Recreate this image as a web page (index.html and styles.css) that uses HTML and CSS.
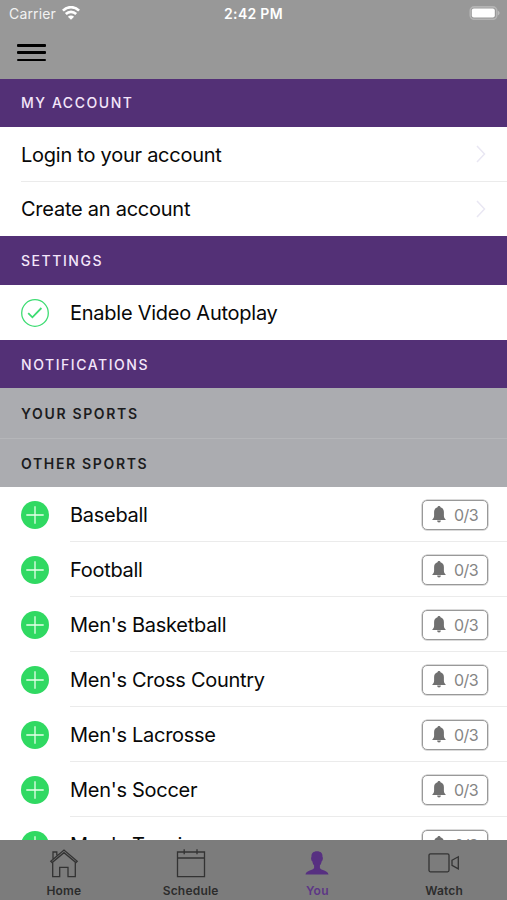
FILE: index.html
```
<!DOCTYPE html>
<html lang="en">
<head>
<meta charset="utf-8">
<title>You</title>
<link rel="stylesheet" href="styles.css">
</head>
<body>
<svg width="0" height="0" class="defs">
  <symbol id="bell" viewBox="0 0 14 17"><path d="M7 0c-.9 0-1.500.6-1.500 1.300C3.300 2 2.100 3.700 2.100 6v3.700C2.100 11.300 1.400 12.500 0 13.900h14c-1.400-1.400-2.100-2.600-2.100-4.200V6c0-2.300-1.200-4-3.400-4.700C8.500.6 7.900 0 7 0zM5.100 14.600a1.900 2 0 0 0 3.800 0z" fill="currentColor"/></symbol>
  <symbol id="plus" viewBox="0 0 28 28"><circle cx="14" cy="14" r="14" fill="#30d962"/><path d="M14 5.300v17.400M5.300 14h17.400" stroke="#e6ffe9" stroke-width="1.300"/></symbol>
  <symbol id="chevron" viewBox="0 0 10 18"><path d="M1 1l7.500 8L1 17" fill="none" stroke="#e9e7f3" stroke-width="1.500"/></symbol>
</svg>
<div class="screen">
  <header class="top">
    <div class="status">
      <div class="carrier"><span>Carrier</span>
        <svg width="18" height="14" viewBox="0 0 18 14" fill="none" stroke="#fff" stroke-width="2.600"><path d="M.9 4.600C5.500 0 12.500 0 17.100 4.600M3.800 8c3-2.900 7.400-2.900 10.400 0"/><path d="M9 13.800L5.900 10.700c1.800-1.600 4.400-1.600 6.200 0z" fill="#fff" stroke="none"/></svg>
      </div>
      <div class="time">2:42 PM</div>
      <svg class="battery" width="31" height="14" viewBox="0 0 31 14"><rect x="1.200" y=".9" width="26.600" height="12.400" rx="4" fill="none" stroke="#b4b4b4" stroke-width="1.600"/><rect x="2.800" y="2.400" width="23" height="9.200" rx="2" fill="#fff"/><path d="M28.900 4.700c2.200.8 2.200 3.800 0 4.600z" fill="#bcbcbc"/></svg>
    </div>
    <div class="menu"><i></i><i></i><i></i></div>
  </header>
  <main class="list">
    <h2 class="section">MY ACCOUNT</h2>
    <div class="link"><span>Login to your account</span><svg width="10" height="18"><use href="#chevron"/></svg></div>
    <div class="link last"><span>Create an account</span><svg width="10" height="18"><use href="#chevron"/></svg></div>
    <h2 class="section settings">SETTINGS</h2>
    <div class="option"><svg width="28" height="28" viewBox="0 0 28 28" fill="none" stroke="#3ddc72"><circle cx="14" cy="14" r="13.300" stroke-width="1.300"/><path d="M7.200 14.200l4.200 4.100 9-9.300" stroke-width="1.800"/></svg><span>Enable Video Autoplay</span></div>
    <h2 class="section notifications">NOTIFICATIONS</h2>
    <h3 class="sub">YOUR SPORTS</h3>
    <h3 class="sub other">OTHER SPORTS</h3>
    <div class="sport"><svg width="28" height="28"><use href="#plus"/></svg><div class="cell"><span>Baseball</span><div class="badge"><svg width="14" height="17"><use href="#bell"/></svg>0/3</div></div></div>
    <div class="sport"><svg width="28" height="28"><use href="#plus"/></svg><div class="cell"><span>Football</span><div class="badge"><svg width="14" height="17"><use href="#bell"/></svg>0/3</div></div></div>
    <div class="sport"><svg width="28" height="28"><use href="#plus"/></svg><div class="cell"><span>Men's Basketball</span><div class="badge"><svg width="14" height="17"><use href="#bell"/></svg>0/3</div></div></div>
    <div class="sport"><svg width="28" height="28"><use href="#plus"/></svg><div class="cell"><span>Men's Cross Country</span><div class="badge"><svg width="14" height="17"><use href="#bell"/></svg>0/3</div></div></div>
    <div class="sport"><svg width="28" height="28"><use href="#plus"/></svg><div class="cell"><span>Men's Lacrosse</span><div class="badge"><svg width="14" height="17"><use href="#bell"/></svg>0/3</div></div></div>
    <div class="sport"><svg width="28" height="28"><use href="#plus"/></svg><div class="cell"><span>Men's Soccer</span><div class="badge"><svg width="14" height="17"><use href="#bell"/></svg>0/3</div></div></div>
    <div class="sport"><svg width="28" height="28"><use href="#plus"/></svg><div class="cell"><span>Men's Tennis</span><div class="badge"><svg width="14" height="17"><use href="#bell"/></svg>0/3</div></div></div>
  </main>
  <nav class="tabs">
    <div class="tab"><svg width="32" height="32" viewBox="0 0 32 32"><path d="M2.800 13.200L16 2l13.200 11.200-1.300 1.300L16 4.700 4.100 14.500zM4.700 13.800v14.900h7v-9.400h8.300v9.400h7.300V13.800M5 10.700V4h3.800v3.200"/></svg><span>Home</span></div>
    <div class="tab"><svg width="32" height="32" viewBox="0 0 32 32"><path d="M2.500 4H29.500v24.700H2.500zM2.500 10H29.500M9.200 1.300v5M22 1.300v5"/></svg><span>Schedule</span></div>
    <div class="tab active"><svg width="32" height="32" viewBox="0 0 32 32"><path d="M16 3.300c-3.800 0-5.800 2.100-5.500 5.700-.8.400-.3 3.700.8 4.200.3 2 1 3.300 1.800 4.100v2.800c-1 2.400-7.900 2.200-8.600 6.400h23c-.7-4.200-7.600-4-8.600-6.400v-2.800c.8-.8 1.500-2.100 1.800-4.100 1.100-.5 1.600-3.800.8-4.200.3-3.600-1.700-5.700-5.500-5.700z"/></svg><span>You</span></div>
    <div class="tab"><svg width="32" height="32" viewBox="0 0 32 32"><rect x="1" y="5.800" width="20" height="18" rx="1.500"/><path d="M24 12.200l6.300-3.400v12l-6.300-3.400z"/></svg><span>Watch</span></div>
  </nav>
</div>
</body>
</html>
```
FILE: styles.css
```
* { box-sizing: border-box; }
body { margin: 0; font-family: Inter, sans-serif; color: #080808; }
.defs { position: absolute; }
svg { flex: none; display: block; }
.screen { width: 507px; height: 900px; display: flex; flex-direction: column; overflow: hidden; background: #fff; }
.top { flex: none; height: 79px; background: #989898; }
.status { height: 27px; display: grid; grid-template-columns: 1fr auto 1fr; align-items: center; padding: 0 7px 0 9px; color: #fff; font-size: 14px; }
.carrier { display: flex; gap: 6px; align-items: center; color: #f2f2f2; letter-spacing: .15px; }
.carrier svg { margin-top: -2px; }
.time { font-weight: 600; letter-spacing: .3px; margin-right: 2px; }
.battery { justify-self: end; margin-top: -1px; }
.menu { display: flex; flex-direction: column; gap: 4.800px; width: 29px; margin: 17px 0 0 17px; }
.menu i { height: 2.500px; border-radius: 1px; background: #000; }
.list { flex: 1; min-height: 0; overflow: hidden; }
.section { margin: 0; height: 48px; padding-left: 21px; line-height: 48px; background: #533076; color: #f4e6fa; font-size: 14px; font-weight: 500; letter-spacing: 1.550px; }
.settings { height: 49px; line-height: 49px; }
.notifications { line-height: 49px; }
.link { height: 55px; margin-left: 21px; padding-right: 21px; border-bottom: 1px solid #ebebeb; display: flex; align-items: center; justify-content: space-between; font-size: 20px; letter-spacing: -.25px; }
.link span { padding-top: 1px; }
.link.last { height: 54px; border-bottom-color: #fff; }
.option { height: 55px; display: flex; align-items: center; gap: 21px; padding-left: 21px; font-size: 20px; letter-spacing: -.25px; }
.sub { margin: 0; height: 51px; padding-left: 21px; line-height: 51px; background: #abacb0; border-bottom: 1px solid #b5b6b9; font-size: 14px; font-weight: 600; letter-spacing: 1.650px; color: #1c1c1e; }
.sub.other { height: 48px; line-height: 49px; border: 0; }
.sport { height: 55px; display: flex; align-items: center; gap: 21px; padding-left: 21px; }
.cell { flex: 1; height: 55px; padding: 1px 19px 0 0; border-bottom: 1px solid #ebebeb; display: flex; align-items: center; justify-content: space-between; font-size: 20px; letter-spacing: -.28px; }
.cell > span { padding-top: 1px; }
.badge { width: 66px; height: 30px; border: 1.500px solid #999; border-radius: 5px; box-shadow: 0 0 0 .5px #b5b5b5; display: flex; align-items: center; gap: 8px; padding-left: 9px; color: #858585; font-size: 16px; letter-spacing: -.5px; }
.badge svg { color: #707070; }
.tabs { flex: none; height: 60px; background: #7c7c7c; display: grid; grid-template-columns: repeat(4, 1fr); }
.tab { display: flex; flex-direction: column; align-items: center; padding: 8px 0 0 1px; font-size: 12px; font-weight: 600; letter-spacing: .2px; color: #2c2c2c; }
.tab svg { fill: none; stroke: #333; stroke-width: 1.300; }
.tab span { line-height: 15px; margin-top: 3px; }
.tab.active { color: #5c3686; }
.tab.active svg { fill: #573081; stroke: none; }
```
